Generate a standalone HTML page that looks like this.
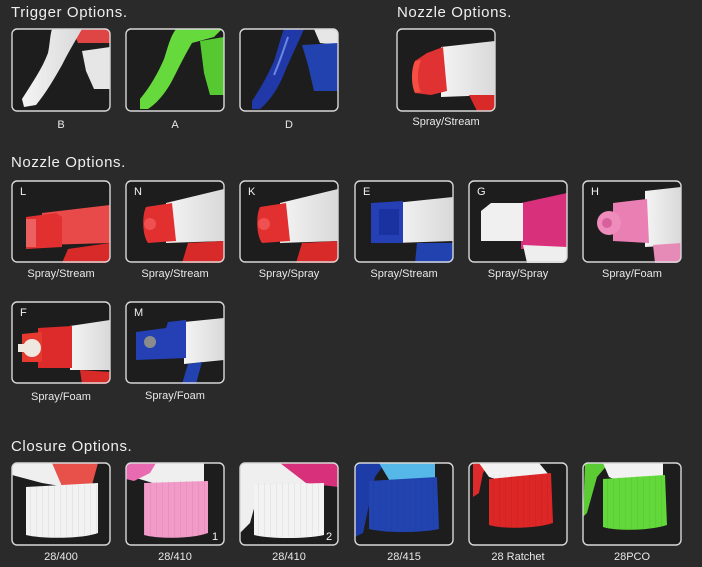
<!DOCTYPE html>
<html><head><meta charset="utf-8"><style>
html,body{margin:0;padding:0;background:#2a2a2b;}
svg{display:block}
text{font-family:"Liberation Sans",Arial,sans-serif;fill:#e8e8e8}
.t{font-size:15px;letter-spacing:0.6px;fill:#efefef}
.l{font-size:11px;text-anchor:middle}
.k{font-size:11px;fill:#f2f2f2}
.bx{fill:none;stroke:#d8d8d8;stroke-width:1.4}
</style></head><body>
<svg width="702" height="567" viewBox="0 0 702 567" xmlns="http://www.w3.org/2000/svg">
<defs>
<clipPath id="c" clipPathUnits="userSpaceOnUse"><rect x="0" y="0" width="98" height="82" rx="5"/></clipPath>
<linearGradient id="wh" x1="0" y1="0" x2="1" y2="0"><stop offset="0" stop-color="#f4f4f4"/><stop offset="1" stop-color="#d9d9d9"/></linearGradient>
<pattern id="rib" width="6" height="10" patternUnits="userSpaceOnUse"><rect width="1" height="10" fill="#000" opacity="0.05"/></pattern>
</defs>
<rect width="702" height="567" fill="#2a2a2b"/>

<text class="t" x="11" y="17">Trigger Options.</text>
<text class="t" x="397" y="17">Nozzle Options.</text>
<text class="t" x="11" y="167">Nozzle Options.</text>
<text class="t" x="11" y="451">Closure Options.</text>

<g transform="translate(12,29)"><g clip-path="url(#c)"><rect width="98" height="82" fill="#1d1d1d"/>
<path d="M60,0 L98,0 L98,14 L66,14Z" fill="#e04545"/>
<path d="M70,22 L98,18 L98,60 L82,60 L74,42Z" fill="#e6e6e6"/>
<path d="M40,0 L70,0 C62,14 56,24 50,36 C42,50 34,64 24,76 L12,78 L10,70 C20,54 30,40 36,24 C38,14 38,6 40,0Z" fill="url(#wh)"/>
</g><rect class="bx" width="98" height="82" rx="5"/></g>
<g transform="translate(126,29)"><g clip-path="url(#c)"><rect width="98" height="82" fill="#1d1d1d"/>
<path d="M74,12 L98,8 L98,66 L84,66 L78,44Z" fill="#56c832"/>
<path d="M50,0 L96,0 L88,8 L66,14 C60,24 54,36 48,48 C42,60 34,72 22,80 L14,80 L14,70 C24,58 32,44 38,30 C42,18 44,8 50,0Z" fill="#66d93c"/>
</g><rect class="bx" width="98" height="82" rx="5"/></g>
<g transform="translate(240,29)"><g clip-path="url(#c)"><rect width="98" height="82" fill="#1d1d1d"/>
<path d="M74,0 L98,0 L98,16 L80,14Z" fill="#e6e6e6"/>
<path d="M62,16 L98,14 L98,62 L74,62 L68,36Z" fill="#2242b0"/>
<path d="M44,0 L64,0 C58,14 52,26 46,40 C40,56 32,70 20,80 L12,80 L12,72 C20,60 28,46 34,32 C38,20 40,10 44,0Z" fill="#2038a8"/>
<path d="M48,8 C44,20 40,32 34,46" stroke="#6b86e0" stroke-width="2" fill="none"/>
</g><rect class="bx" width="98" height="82" rx="5"/></g>
<g transform="translate(397,29)"><g clip-path="url(#c)"><rect width="98" height="82" fill="#1d1d1d"/>
<path d="M44,18 L98,12 L98,66 L44,68Z" fill="url(#wh)"/>
<path d="M72,66 L98,66 L98,82 L80,82Z" fill="#d92a2a"/>
<path d="M18,32 L30,24 L46,18 L50,62 L34,66 L18,64 C14,56 14,40 18,32Z" fill="#e03232"/>
<path d="M18,32 C14,40 14,56 18,64 L24,63 C20,55 20,41 24,31Z" fill="#ff5a4a" opacity=".7"/>
</g><rect class="bx" width="98" height="82" rx="5"/></g>
<text class="l" x="446" y="125">Spray/Stream</text>
<text class="l" x="61" y="128">B</text>
<text class="l" x="175" y="128">A</text>
<text class="l" x="289" y="128">D</text>

<g transform="translate(12,181)"><g clip-path="url(#c)"><rect width="98" height="82" fill="#1d1d1d"/>
<path d="M30,32 L98,24 L98,62 L30,64Z" fill="#e84a4a"/>
<path d="M56,68 L98,62 L98,82 L50,82Z" fill="#d92a2a"/>
<path d="M14,36 L44,32 L50,36 L50,66 L14,68Z" fill="#e23030"/>
<rect x="14" y="38" width="10" height="28" fill="#ec6060"/>
</g><rect class="bx" width="98" height="81" rx="5"/><text class="k" x="8" y="14">L</text></g>
<g transform="translate(126,181)"><g clip-path="url(#c)"><rect width="98" height="82" fill="#1d1d1d"/>
<path d="M40,22 L98,8 L98,60 L40,62Z" fill="url(#wh)"/>
<path d="M62,62 L98,60 L98,82 L56,82Z" fill="#d92a2a"/>
<path d="M20,26 L46,22 L50,60 L22,62 C16,54 16,34 20,26Z" fill="#e23030"/>
<circle cx="24" cy="43" r="6" fill="#f05050"/>
</g><rect class="bx" width="98" height="81" rx="5"/><text class="k" x="8" y="14">N</text></g>
<g transform="translate(240,181)"><g clip-path="url(#c)"><rect width="98" height="82" fill="#1d1d1d"/>
<path d="M40,22 L98,8 L98,60 L40,62Z" fill="url(#wh)"/>
<path d="M62,62 L98,60 L98,82 L56,82Z" fill="#d92a2a"/>
<path d="M20,26 L46,22 L50,60 L22,62 C16,54 16,34 20,26Z" fill="#e23030"/>
<circle cx="24" cy="43" r="6" fill="#f05050"/>
</g><rect class="bx" width="98" height="81" rx="5"/><text class="k" x="8" y="14">K</text></g>
<g transform="translate(355,181)"><g clip-path="url(#c)"><rect width="98" height="82" fill="#1d1d1d"/>
<path d="M40,22 L98,16 L98,60 L40,62Z" fill="url(#wh)"/>
<path d="M62,62 L98,62 L98,82 L60,82Z" fill="#2242b0"/>
<path d="M16,22 L48,20 L48,62 L16,62Z" fill="#2440b4"/>
<rect x="24" y="28" width="20" height="26" fill="#1a32a0"/>
</g><rect class="bx" width="98" height="81" rx="5"/><text class="k" x="8" y="14">E</text></g>
<g transform="translate(469,181)"><g clip-path="url(#c)"><rect width="98" height="82" fill="#1d1d1d"/>
<path d="M52,22 L98,12 L98,68 L52,68Z" fill="#d8307a"/>
<path d="M54,64 L98,66 L98,82 L58,82Z" fill="#eeeeee"/>
<path d="M12,30 L22,22 L54,22 L54,60 L12,60Z" fill="#f0f0f0"/>
</g><rect class="bx" width="98" height="81" rx="5"/><text class="k" x="8" y="14">G</text></g>
<g transform="translate(583,181)"><g clip-path="url(#c)"><rect width="98" height="82" fill="#1d1d1d"/>
<path d="M62,10 L98,6 L98,64 L62,66Z" fill="url(#wh)"/>
<path d="M70,64 L98,62 L98,82 L72,82Z" fill="#e68ab8"/>
<path d="M30,22 L64,18 L66,62 L30,60Z" fill="#ea7fb4"/>
<circle cx="26" cy="42" r="12" fill="#ee8cbc"/><circle cx="24" cy="42" r="5" fill="#d8609c"/>
</g><rect class="bx" width="98" height="81" rx="5"/><text class="k" x="8" y="14">H</text></g>
<text class="l" x="61" y="277">Spray/Stream</text>
<text class="l" x="175" y="277">Spray/Stream</text>
<text class="l" x="289" y="277">Spray/Spray</text>
<text class="l" x="404" y="277">Spray/Stream</text>
<text class="l" x="518" y="277">Spray/Spray</text>
<text class="l" x="632" y="277">Spray/Foam</text>

<g transform="translate(12,302)"><g clip-path="url(#c)"><rect width="98" height="82" fill="#1d1d1d"/>
<path d="M58,24 L98,18 L98,68 L58,68Z" fill="url(#wh)"/>
<path d="M68,68 L98,70 L98,82 L70,82Z" fill="#d92a2a"/>
<path d="M26,26 L60,24 L60,66 L26,66Z" fill="#dd2a2a"/>
<path d="M10,32 L30,30 L30,60 L10,60Z" fill="#e63a30"/>
<circle cx="20" cy="46" r="9" fill="#efe8e0"/><rect x="6" y="42" width="6" height="8" fill="#efe8e0"/>
</g><rect class="bx" width="98" height="81" rx="5"/><text class="k" x="8" y="14">F</text></g>
<g transform="translate(126,302)"><g clip-path="url(#c)"><rect width="98" height="82" fill="#1d1d1d"/>
<path d="M58,20 L98,16 L98,58 L58,62Z" fill="url(#wh)"/>
<path d="M62,62 L76,60 L70,82 L56,82Z" fill="#2242b0"/>
<path d="M10,30 L40,26 L42,20 L60,18 L60,56 L10,58Z" fill="#2440b4"/>
<circle cx="24" cy="40" r="6" fill="#8b8b8b"/>
</g><rect class="bx" width="98" height="81" rx="5"/><text class="k" x="8" y="14">M</text></g>
<text class="l" x="61" y="400">Spray/Foam</text>
<text class="l" x="175" y="399">Spray/Foam</text>

<g transform="translate(12,463)"><g clip-path="url(#c)"><rect width="98" height="82" fill="#1d1d1d"/>
<path d="M0,0 L80,0 L80,24 L54,24 L30,20 L0,12Z" fill="#efefef"/>
<path d="M40,0 L86,0 L80,22 L52,28Z" fill="#e8504a"/>
<path d="M14,24 L86,20 L86,70 C70,76 30,76 14,72Z" fill="#f2f2f2"/>
<rect x="14" y="22" width="72" height="52" fill="url(#rib)"/>
</g><rect class="bx" width="98" height="82" rx="5"/></g>
<g transform="translate(126,463)"><g clip-path="url(#c)"><rect width="98" height="82" fill="#1d1d1d"/>
<path d="M0,0 L78,0 L78,22 L40,24 L0,12Z" fill="#efefef"/>
<path d="M0,0 L30,0 L24,10 L8,18 L0,16Z" fill="#e86ab0"/>
<path d="M18,20 L82,18 L82,70 C66,76 32,76 18,72Z" fill="#f29ac8"/>
<rect x="18" y="18" width="64" height="56" fill="url(#rib)"/>
</g><rect class="bx" width="98" height="82" rx="5"/><text class="k" x="86" y="77">1</text></g>
<g transform="translate(240,463)"><g clip-path="url(#c)"><rect width="98" height="82" fill="#1d1d1d"/>
<path d="M0,0 L98,0 L98,22 L20,24 L10,60 L0,70Z" fill="#efefef"/>
<path d="M40,0 L98,0 L98,24 L66,20Z" fill="#d8307a"/>
<path d="M14,22 L84,20 L84,72 C66,76 30,76 14,72Z" fill="#f3f3f3"/>
<rect x="14" y="20" width="70" height="54" fill="url(#rib)"/>
</g><rect class="bx" width="98" height="82" rx="5"/><text class="k" x="86" y="77">2</text></g>
<g transform="translate(355,463)"><g clip-path="url(#c)"><rect width="98" height="82" fill="#1d1d1d"/>
<path d="M0,0 L30,0 L20,14 L8,70 L0,74Z" fill="#1e3ca8"/>
<path d="M24,0 L80,0 L80,20 L50,28 L36,20Z" fill="#56b8e8"/>
<path d="M14,18 L82,14 L84,66 C66,70 30,70 14,66Z" fill="#2244b0"/>
<rect x="14" y="16" width="70" height="52" fill="url(#rib)"/>
</g><rect class="bx" width="98" height="82" rx="5"/></g>
<g transform="translate(469,463)"><g clip-path="url(#c)"><rect width="98" height="82" fill="#1d1d1d"/>
<path d="M4,0 L20,0 L14,10 L10,30 L4,34Z" fill="#dd2a2a"/>
<path d="M10,0 L70,0 L80,12 L40,20 L20,14Z" fill="#f2f2f2"/>
<path d="M20,16 L82,10 L84,60 C66,66 32,66 20,62Z" fill="#dd2626"/>
<rect x="20" y="12" width="64" height="52" fill="url(#rib)"/>
</g><rect class="bx" width="98" height="82" rx="5"/></g>
<g transform="translate(583,463)"><g clip-path="url(#c)"><rect width="98" height="82" fill="#1d1d1d"/>
<path d="M2,0 L26,0 L14,14 L4,50 L0,54Z" fill="#5ccc34"/>
<path d="M20,0 L80,0 L80,14 L40,20 L26,14Z" fill="#f2f2f2"/>
<path d="M20,16 L82,12 L84,62 C66,68 32,68 20,64Z" fill="#62d83a"/>
<rect x="20" y="14" width="64" height="52" fill="url(#rib)"/>
</g><rect class="bx" width="98" height="82" rx="5"/></g>
<text class="l" x="61" y="560">28/400</text>
<text class="l" x="175" y="560">28/410</text>
<text class="l" x="289" y="560">28/410</text>
<text class="l" x="404" y="560">28/415</text>
<text class="l" x="518" y="560">28 Ratchet</text>
<text class="l" x="632" y="560">28PCO</text>
</svg>
</body></html>
